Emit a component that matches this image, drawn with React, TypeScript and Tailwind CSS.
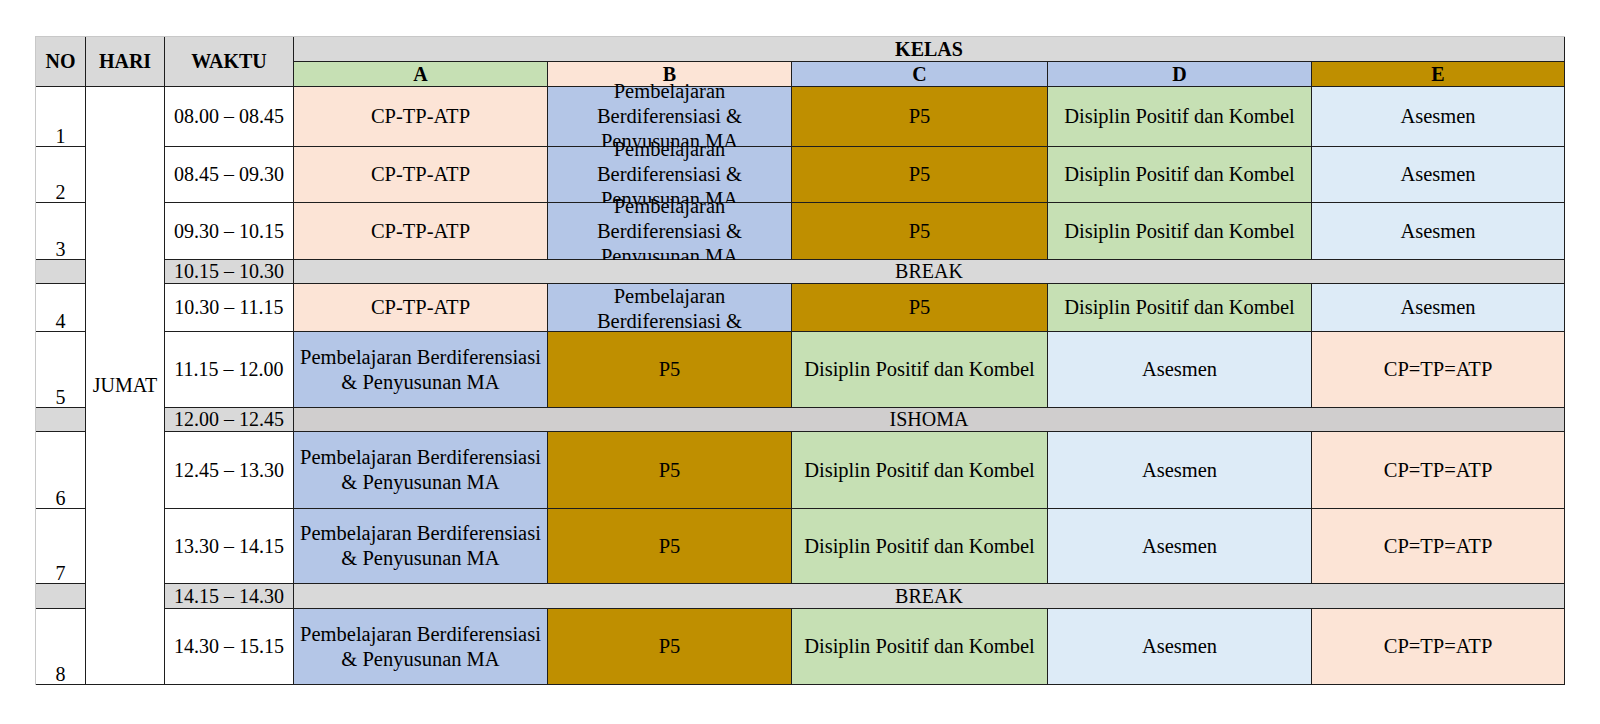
type Kind = "cp" | "cpEq" | "pb" | "pbB" | "pbTop" | "p5" | "dp" | "as";

type Lesson = { no: string; time: string; cells: Kind[] };
type Pause = { time: string; label: string; dark?: boolean };
type Row = Lesson | Pause;

const kinds: Record<Kind, { bg: string; text: string[] }> = {
  cp: { bg: "bg-[#fce4d6]", text: ["CP-TP-ATP"] },
  cpEq: { bg: "bg-[#fce4d6]", text: ["CP=TP=ATP"] },
  pb: { bg: "bg-[#b4c6e7]", text: ["Pembelajaran Berdiferensiasi & Penyusunan MA"] },
  pbB: { bg: "bg-[#b4c6e7]", text: ["Pembelajaran", "Berdiferensiasi &", "Penyusunan MA"] },
  pbTop: { bg: "bg-[#b4c6e7]", text: ["Pembelajaran", "Berdiferensiasi &", "Penyusunan MA"] },
  p5: { bg: "bg-[#bf8f00]", text: ["P5"] },
  dp: { bg: "bg-[#c6e0b4]", text: ["Disiplin Positif dan Kombel"] },
  as: { bg: "bg-[#ddebf7]", text: ["Asesmen"] },
};

const morning: Kind[] = ["cp", "pbB", "p5", "dp", "as"];
const afternoon: Kind[] = ["pb", "p5", "dp", "as", "cpEq"];

const rows: Row[] = [
  { no: "1", time: "08.00 – 08.45", cells: morning },
  { no: "2", time: "08.45 – 09.30", cells: morning },
  { no: "3", time: "09.30 – 10.15", cells: morning },
  { time: "10.15 – 10.30", label: "BREAK" },
  { no: "4", time: "10.30 – 11.15", cells: ["cp", "pbTop", "p5", "dp", "as"] },
  { no: "5", time: "11.15 – 12.00", cells: afternoon },
  { time: "12.00 – 12.45", label: "ISHOMA", dark: true },
  { no: "6", time: "12.45 – 13.30", cells: afternoon },
  { no: "7", time: "13.30 – 14.15", cells: afternoon },
  { time: "14.15 – 14.30", label: "BREAK" },
  { no: "8", time: "14.30 – 15.15", cells: afternoon },
];

const heads = [
  { label: "A", bg: "bg-[#c6e0b4]" },
  { label: "B", bg: "bg-[#fce4d6]" },
  { label: "C", bg: "bg-[#b4c6e7]" },
  { label: "D", bg: "bg-[#b4c6e7]" },
  { label: "E", bg: "bg-[#bf8f00]" },
];

function LessonCell({ kind }: { kind: Kind }) {
  const k = kinds[kind];
  const align = kind === "pbTop" ? "justify-start overflow-hidden" : "justify-center";
  return (
    <div className={`flex flex-col items-center px-1 text-center text-[20.5px] ${align} ${k.bg}`}>
      {k.text.map((line) => (
        <span key={line} className="whitespace-normal">
          {line}
        </span>
      ))}
    </div>
  );
}

export default function App() {
  return (
    <main className="min-h-screen bg-white pl-[35px] pt-[36px] font-[family-name:'Liberation_Serif','Times_New_Roman',serif] text-[20px] leading-[25px] text-black">
      <div className="grid w-[1530px] grid-cols-[49px_78px_128px_253px_243px_255px_263px_252px] grid-rows-[24px_24px_59px_55px_56px_23px_47px_75px_23px_76px_74px_24px_75px] gap-px border-l border-t border-[#c8c8c8] bg-[#1e1e1e] pb-px pr-px">
        <div className="row-span-2 flex items-center justify-center bg-[#d9d9d9] font-bold">NO</div>
        <div className="row-span-2 flex items-center justify-center bg-[#d9d9d9] font-bold">HARI</div>
        <div className="row-span-2 flex items-center justify-center bg-[#d9d9d9] font-bold">WAKTU</div>
        <div className="col-span-5 flex items-center justify-center bg-[#d9d9d9] font-bold">KELAS</div>
        {heads.map((h) => (
          <div key={h.label} className={`flex items-center justify-center font-bold ${h.bg}`}>
            {h.label}
          </div>
        ))}

        {rows.map((row, i) => {
          if ("label" in row) {
            const band = row.dark ? "bg-[#d0cece]" : "bg-[#d9d9d9]";
            return [
              <div key={`n${i}`} className="col-start-1 bg-[#d9d9d9]" />,
              <div key={`t${i}`} className="col-start-3 flex items-center justify-center bg-[#d9d9d9]">
                {row.time}
              </div>,
              <div key={`l${i}`} className={`col-span-5 flex items-center justify-center ${band}`}>
                {row.label}
              </div>,
            ];
          }
          return [
            <div key={`n${i}`} className="col-start-1 flex items-end justify-center bg-white leading-[20px]">
              {row.no}
            </div>,
            i === 0 ? (
              <div key="hari" className="col-start-2 row-span-11 flex items-center justify-center bg-white">
                JUMAT
              </div>
            ) : null,
            <div key={`t${i}`} className="col-start-3 flex items-center justify-center bg-white">
              {row.time}
            </div>,
            ...row.cells.map((kind, j) => <LessonCell key={`c${i}-${j}`} kind={kind} />),
          ];
        })}
      </div>
    </main>
  );
}
